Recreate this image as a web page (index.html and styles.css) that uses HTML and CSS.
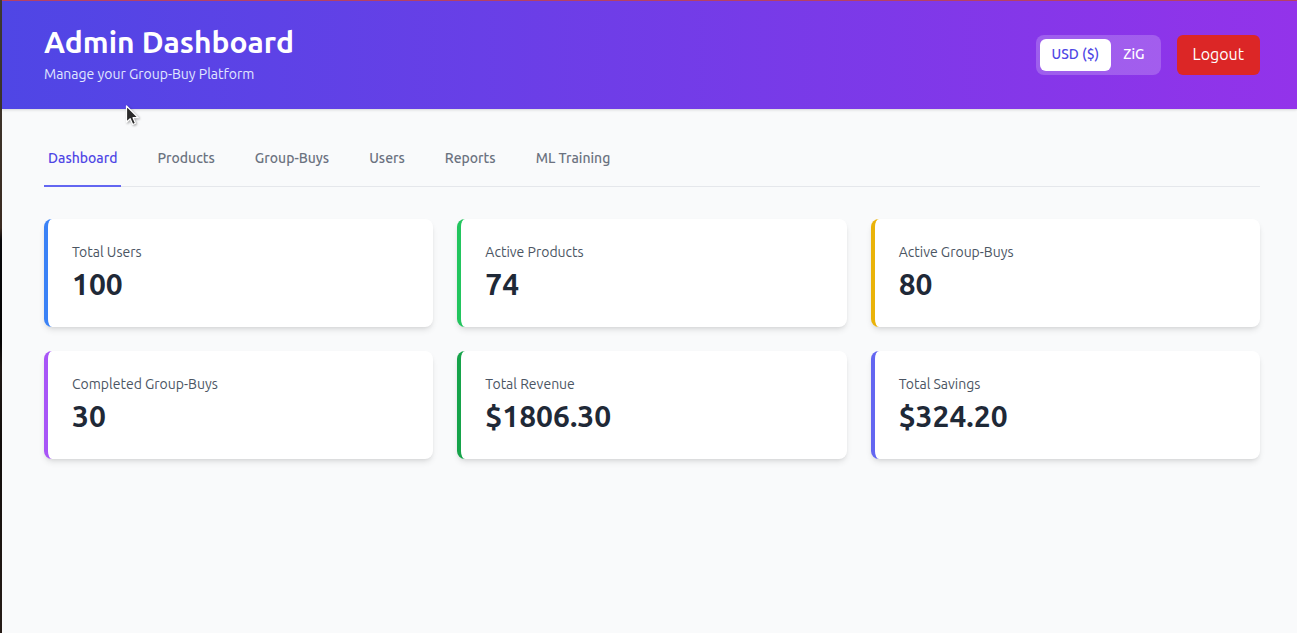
FILE: index.html
```
<!DOCTYPE html>
<html lang="en">
<head>
<meta charset="utf-8">
<meta name="viewport" content="width=device-width, initial-scale=1">
<title>Admin Dashboard</title>
<link rel="stylesheet" href="styles.css">
</head>
<body>
<header class="header">
  <div class="heading">
    <h1 class="title">Admin Dashboard</h1>
    <p class="subtitle">Manage your Group-Buy Platform</p>
  </div>
  <div class="actions">
    <div class="currency" role="group" aria-label="Currency">
      <button class="currency-option currency-active" type="button" aria-pressed="true">USD ($)</button>
      <button class="currency-option" type="button" aria-pressed="false">ZiG</button>
    </div>
    <button class="logout" type="button">Logout</button>
  </div>
</header>
<main class="main">
  <nav class="tabs" aria-label="Sections">
    <a class="tab tab-active" href="#dashboard" aria-current="page">Dashboard</a>
    <a class="tab" href="#products">Products</a>
    <a class="tab" href="#group-buys">Group-Buys</a>
    <a class="tab" href="#users">Users</a>
    <a class="tab" href="#reports">Reports</a>
    <a class="tab" href="#ml-training">ML Training</a>
  </nav>
  <section class="stats" aria-label="Statistics">
    <article class="card blue"><p class="label">Total Users</p><p class="value">100</p></article>
    <article class="card green"><p class="label">Active Products</p><p class="value">74</p></article>
    <article class="card yellow"><p class="label">Active Group-Buys</p><p class="value">80</p></article>
    <article class="card purple"><p class="label">Completed Group-Buys</p><p class="value">30</p></article>
    <article class="card emerald"><p class="label">Total Revenue</p><p class="value">$1806.30</p></article>
    <article class="card indigo"><p class="label">Total Savings</p><p class="value">$324.20</p></article>
  </section>
</main>
<svg class="cursor" width="16" height="22" viewBox="0 0 16 22" aria-hidden="true">
  <path d="M1.5 1v16.2l3.7-3.5 2.5 5.8 2.8-1.2-2.5-5.6h5.3z" fill="#2b2b2b" stroke="#fff" stroke-width="1.2" stroke-linejoin="round"/>
</svg>
</body>
</html>
```
FILE: styles.css
```
* {
  box-sizing: border-box;
}

body {
  margin: 0;
  min-height: 100vh;
  padding: 1px 0 0 2px;
  background:
    linear-gradient(#403c34, #3a2a20 36%, #08080b 38%, #050404 54%, #1f1714 58%, #120d0b 70%, #261c17) left / 2px 100% no-repeat,
    linear-gradient(#b94468, #b94468) top / 100% 1px no-repeat,
    #f9fafb;
  color: #1f2937;
  font-family: Ubuntu, "Noto Sans", sans-serif;
  font-size: 14px;
  line-height: 20px;
}

h1,
p {
  margin: 0;
}

button {
  border: 0;
  font: inherit;
  cursor: pointer;
}

.header {
  display: flex;
  align-items: center;
  justify-content: space-between;
  padding: 23px 37px 23px 42px;
  background: linear-gradient(to right, #4f46e5, #9333ea);
  box-shadow: 0 1px 3px rgba(0, 0, 0, 0.1), 0 1px 2px rgba(0, 0, 0, 0.06);
  color: #fff;
}

.heading {
  padding-bottom: 2px;
}

.title {
  font-size: 30px;
  font-weight: 700;
  line-height: 36px;
}

.subtitle {
  margin-top: 4px;
  color: #e0e7ff;
}

.actions {
  display: flex;
  align-items: center;
  gap: 16px;
}

.currency {
  display: flex;
  padding: 4px;
  border-radius: 8px;
  background: rgba(255, 255, 255, 0.2);
}

.currency-option {
  padding: 5px 12px 7px;
  border-radius: 6px;
  background: transparent;
  color: #fff;
  font-weight: 500;
}

.currency-active {
  background: #fff;
  color: #4f46e5;
}

.logout {
  padding: 7px 16px 9px;
  border-radius: 6px;
  background: #dc2626;
  color: #fff;
  font-size: 16px;
  line-height: 24px;
}

.main {
  padding: 24px 37px 24px 42px;
}

.tabs {
  display: flex;
  gap: 32px;
  margin-bottom: 32px;
  box-shadow: inset 0 -1px #e5e7eb;
}

.tab {
  padding: 15px 4px 17px;
  border-bottom: 2px solid transparent;
  color: #6b7280;
  font-weight: 500;
  text-decoration: none;
}

.tab-active {
  border-color: #6366f1;
  color: #4f46e5;
}

.stats {
  display: grid;
  grid-template-columns: repeat(3, 1fr);
  gap: 24px;
}

.card {
  padding: 23px 24px 25px;
  border-left: 4px solid;
  border-radius: 8px;
  background: #fff;
  box-shadow: 0 4px 6px -1px rgba(0, 0, 0, 0.1), 0 2px 4px -2px rgba(0, 0, 0, 0.1);
}

.label {
  color: #4b5563;
}

.value {
  margin-top: 4px;
  color: #1f2937;
  font-size: 30px;
  font-weight: 700;
  line-height: 36px;
}

.blue { border-color: #3b82f6; }
.green { border-color: #22c55e; }
.yellow { border-color: #eab308; }
.purple { border-color: #a855f7; }
.emerald { border-color: #16a34a; }
.indigo { border-color: #6366f1; }

.cursor {
  position: absolute;
  top: 105px;
  left: 125px;
  filter: drop-shadow(1px 1px 1px rgba(0, 0, 0, 0.35));
  pointer-events: none;
}
```
